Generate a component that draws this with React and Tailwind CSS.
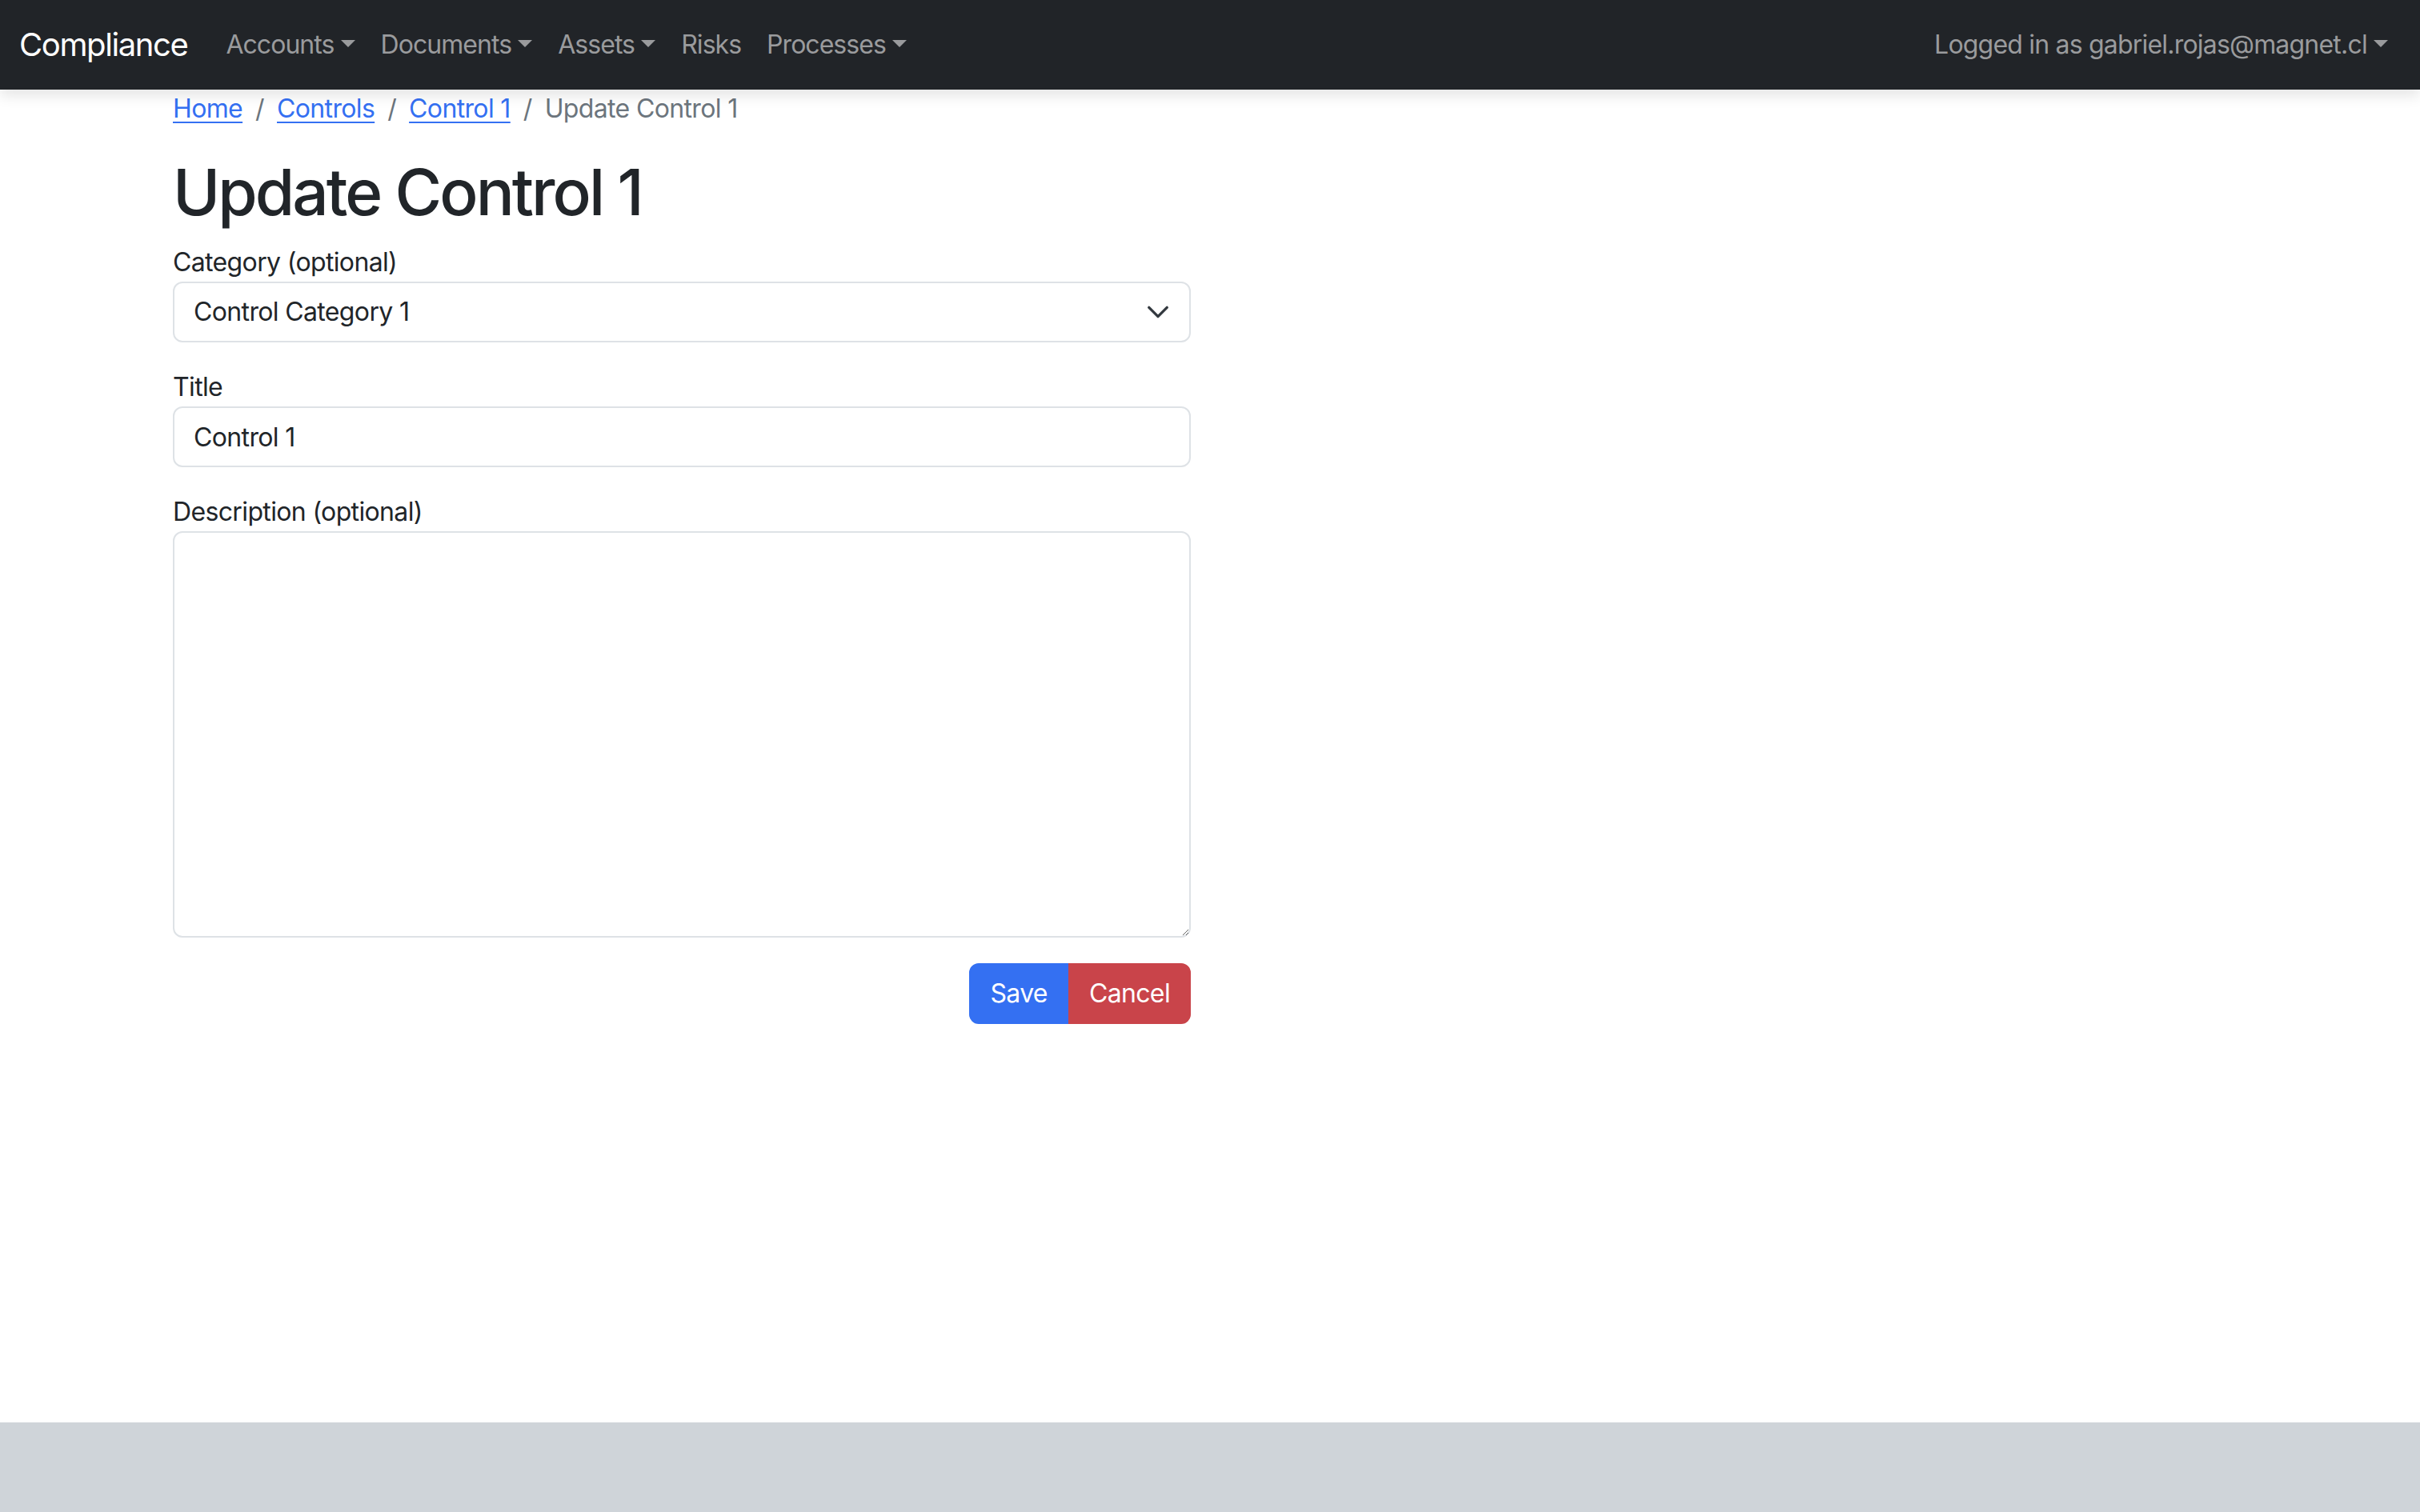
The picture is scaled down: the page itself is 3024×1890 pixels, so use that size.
const navItems = [
  { label: 'Accounts', dropdown: true },
  { label: 'Documents', dropdown: true },
  { label: 'Assets', dropdown: true },
  { label: 'Risks', dropdown: false },
  { label: 'Processes', dropdown: true },
]

const Caret = () => (
  <span className="inline-block w-0 h-0 ml-[0.255em] align-[0.255em] border-x-[0.3em] border-t-[0.3em] border-x-transparent border-t-current" />
)

const Navbar = () => (
  <nav className="relative z-10 flex items-center justify-between h-[112px] px-[24px] py-[16px] bg-[#212428] shadow-[0_8px_16px_rgba(0,0,0,0.1)]">
    <div className="flex items-center">
      <a className="mr-[32px] py-[10px] text-[40px] leading-[60px] tracking-[-0.035em] text-white">Compliance</a>
      <ul className="flex items-center">
        {navItems.map((item) => (
          <li key={item.label}>
            <a className="block px-[16px] py-[16px] text-[32px] leading-[48px] tracking-[-0.03em] text-[#9a9b9d]">
              {item.label}
              {item.dropdown && <Caret />}
            </a>
          </li>
        ))}
      </ul>
    </div>
    <a className="block px-[16px] py-[16px] text-[32px] leading-[48px] tracking-[-0.025em] text-[#9a9b9d]">
      Logged in as gabriel.rojas@magnet.cl
      <Caret />
    </a>
  </nav>
)

const Breadcrumb = () => {
  const links = ['Home', 'Controls', 'Control 1']
  return (
    <ol className="flex items-center mb-[32px] text-[32px] leading-[48px]">
      {links.map((label, i) => (
        <li key={label} className="flex items-center">
          {i > 0 && <span className="px-[16px] text-[#6c757d]">/</span>}
          <a className="text-[#3470f2] underline decoration-[2px] underline-offset-[5px]">{label}</a>
        </li>
      ))}
      <li className="flex items-center text-[#6c757d]">
        <span className="px-[16px]">/</span>
        Update Control 1
      </li>
    </ol>
  )
}

const fieldClass =
  'block w-full h-[76px] px-[24px] py-[12px] text-[32px] leading-[48px] tracking-[-0.02em] text-[#212529] bg-white border-2 border-[#dee2e6] rounded-[12px] outline-none'

export default function App() {
  return (
    <div className="flex flex-col min-h-screen bg-white text-[#212529] font-['Inter',sans-serif] text-[32px] leading-[48px] tracking-[-0.02em]">
      <Navbar />

      <main className="flex-1">
        <div className="max-w-[2640px] mx-auto px-[24px]">
          <Breadcrumb />

          <h1 className="mb-[16px] text-[80px] leading-[96px] font-medium tracking-[-0.037em]">Update Control 1</h1>

          <form className="w-[1272px]">
            <div className="mb-[32px]">
              <label className="block">Category (optional)</label>
              <div className="relative">
                <select className={`${fieldClass} appearance-none pr-[72px]`} defaultValue="1">
                  <option value="1">Control Category 1</option>
                </select>
                <svg
                  className="absolute right-[26px] top-1/2 -translate-y-1/2 w-[30px] h-[30px] pointer-events-none"
                  viewBox="0 0 16 16"
                  fill="none"
                  stroke="#343a40"
                  strokeWidth="1.8"
                  strokeLinecap="round"
                  strokeLinejoin="round"
                >
                  <path d="M2 5l6 6 6-6" />
                </svg>
              </div>
            </div>

            <div className="mb-[32px]">
              <label className="block">Title</label>
              <input className={fieldClass} defaultValue="Control 1" />
            </div>

            <div className="mb-[32px]">
              <label className="block">Description (optional)</label>
              <textarea
                className="block w-full h-[508px] px-[24px] py-[12px] text-[32px] leading-[48px] bg-white border-2 border-[#dee2e6] rounded-[12px] outline-none resize-y"
              />
            </div>

            <div className="flex justify-end">
              <div className="flex">
                <button
                  type="button"
                  className="h-[76px] px-[24px] text-[32px] leading-[48px] text-white bg-[#3470f2] border-2 border-[#3470f2] rounded-l-[12px]"
                >
                  Save
                </button>
                <button
                  type="button"
                  className="h-[76px] px-[24px] text-[32px] leading-[48px] text-white bg-[#c9444a] border-2 border-[#c9444a] rounded-r-[12px]"
                >
                  Cancel
                </button>
              </div>
            </div>
          </form>
        </div>
      </main>

      <footer className="h-[112px] bg-[#cfd4d9]" />
    </div>
  )
}
